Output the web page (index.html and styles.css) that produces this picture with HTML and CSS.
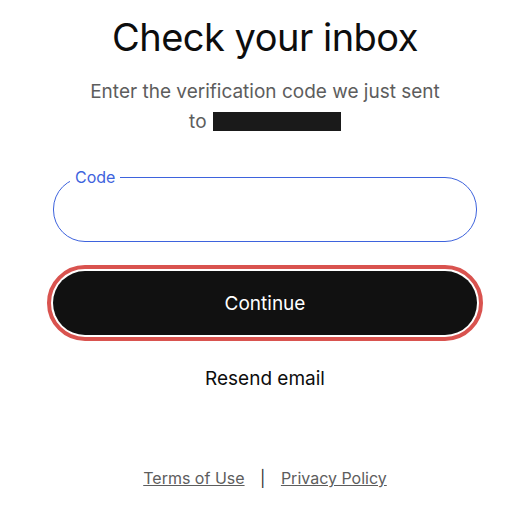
FILE: index.html
```html
<!DOCTYPE html>
<html lang="en">
<head>
    <meta charset="UTF-8" />
    <meta name="viewport" content="width=device-width, initial-scale=1.0"/>
    <title>Check your inbox</title>
    <link rel="stylesheet" href="styles.css">
</head>
<body>
    <main class="box">
        <h1 class="titel">Check your inbox</h1>
        <p class="hinweis">Enter the verification code we just sent to <span class="geschwaerzt"></span></p>

        <form class="formular">
            <fieldset class="feld">
                <legend class="feld-label">Code</legend>
                <input type="text" class="feld-input" autocomplete="one-time-code" />
            </fieldset>

            <div class="knopf-rahmen">
                <button type="button" class="knopf">Continue</button>
            </div>

            <button type="button" class="link-knopf">Resend email</button>
        </form>

        <footer class="fuss">
            <a href="#">Terms of Use</a>
            <span class="trenner">|</span>
            <a href="#">Privacy Policy</a>
        </footer>
    </main>
</body>
</html>
```

FILE: styles.css
```css
body {
    margin: 0;
    background-color: #fff;
    color: #0d0d0d;
    font-family: Inter, "Noto Sans", sans-serif;
}

.box {
    width: 424px;
    margin: 0 auto;
    padding-top: 14px;
    display: flex;
    flex-direction: column;
    align-items: center;
}

.titel {
    margin: 0;
    font-size: 38px;
    font-weight: 400;
    letter-spacing: -0.5px;
    line-height: 46px;
}

.hinweis {
    width: 356px;
    margin: 17px 0 0;
    font-size: 19px;
    line-height: 30px;
    color: #5d5d5d;
    text-align: center;
}

.geschwaerzt {
    display: inline-block;
    width: 128px;
    height: 19px;
    vertical-align: -3px;
    margin-left: 1px;
    background-color: #1a1a1a;
}

.formular {
    width: 100%;
    margin-top: 30px;
    display: flex;
    flex-direction: column;
    align-items: center;
}

.feld {
    box-sizing: border-box;
    width: 100%;
    height: 75px;
    margin: 0;
    padding: 0 16px;
    border: 1px solid #3e63dd;
    border-radius: 32px;
}

.feld-label {
    padding: 0 5px;
    font-size: 16px;
    color: #3e63dd;
}

.feld-input {
    width: 100%;
    border: none;
    outline: none;
    font-size: 16px;
    font-family: inherit;
    background: transparent;
}

.knopf-rahmen {
    box-sizing: border-box;
    width: calc(100% + 12px);
    margin-top: 23px;
    padding: 2px;
    border: 4px solid #d9534f;
    border-radius: 40px;
}

.knopf {
    display: block;
    width: 100%;
    height: 64px;
    border: none;
    border-radius: 32px;
    background-color: #111;
    color: #fff;
    font-family: inherit;
    font-size: 19px;
    cursor: pointer;
}

.link-knopf {
    margin-top: 25px;
    border: none;
    background: none;
    color: #0d0d0d;
    font-family: inherit;
    font-size: 19px;
    cursor: pointer;
}

.fuss {
    margin-top: 77px;
    font-size: 16px;
    color: #5d5d5d;
}

.fuss a {
    color: #5d5d5d;
}

.trenner {
    margin: 0 11px;
    color: #333;
}
```
